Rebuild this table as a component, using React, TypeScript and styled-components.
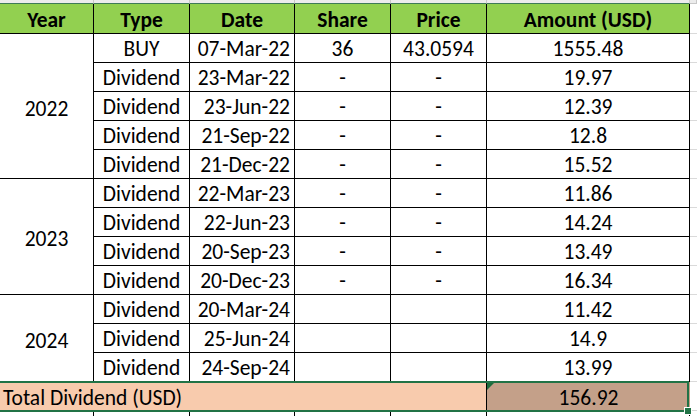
import React from 'react';
import styled, { createGlobalStyle } from 'styled-components';

const GlobalStyle = createGlobalStyle`
  html, body {
    margin: 0;
    padding: 0;
    background: #ffffff;
  }
  body {
    font-family: Calibri, Carlito, Lato, "Liberation Sans", sans-serif;
    color: #000000;
    overflow: hidden;
  }
`;

const COLS = '94px 96px 105px 96px 96px 203px 1fr';

const Sheet = styled.div`
  position: relative;
  width: 697px;
  height: 416px;
  overflow: hidden;
  display: grid;
  grid-template-columns: ${COLS};
  grid-auto-rows: 29px;
  grid-template-rows: 4px 30px;
`;

const StripCell = styled.div<{ $spill?: boolean }>`
  background: #ececec;
  border-right: 1px solid #c8c8c8;
  border-bottom: 1px solid ${(p) => (p.$spill ? '#c8c8c8' : '#3e7b57')};
  box-sizing: border-box;
`;

const HeadCell = styled.div`
  background: #92d050;
  border-right: 1px solid #000;
  border-bottom: 1px solid #000;
  box-sizing: border-box;
  font-weight: 700;
  font-size: 21.5px;
  display: flex;
  align-items: flex-end;
  justify-content: center;
  padding-bottom: 0;
  white-space: nowrap;
`;

const Cell = styled.div<{ $align?: 'center' | 'right' }>`
  border-right: 1px solid #000;
  border-bottom: 1px solid #000;
  box-sizing: border-box;
  font-size: 21.5px;
  display: flex;
  align-items: flex-end;
  justify-content: ${(p) => (p.$align === 'right' ? 'flex-end' : 'center')};
  padding: 0 4px 0 4px;
  white-space: nowrap;
`;

const YearCell = styled(Cell)<{ $rows: number }>`
  grid-row: span ${(p) => p.$rows};
  align-items: center;
  padding-top: 5px;
  padding-bottom: 0;
`;

const SpillCell = styled.div`
  border-bottom: 1px solid #dadada;
  box-sizing: border-box;
`;

const TotalLabel = styled.div`
  grid-column: span 5;
  background: #f8cbad;
  border-right: 1px solid #000;
  box-sizing: border-box;
  font-size: 21.5px;
  display: flex;
  align-items: center;
  padding: 3px 0 0 3px;
  white-space: nowrap;
`;

const TotalValue = styled.div`
  position: relative;
  background: #c4a089;
  font-size: 21.5px;
  display: flex;
  align-items: center;
  justify-content: center;
  padding-top: 3px;
`;

const ErrorMark = styled.span`
  position: absolute;
  left: 0;
  top: 1px;
  width: 0;
  height: 0;
  border-top: 7px solid #1e6b3c;
  border-right: 7px solid transparent;
`;

const TailCell = styled.div<{ $last?: boolean }>`
  border-right: ${(p) => (p.$last ? 'none' : '1px solid #000')};
  box-sizing: border-box;
`;

const Selection = styled.div`
  position: absolute;
  left: -4px;
  top: 381px;
  width: 693px;
  height: 31px;
  border: 2px solid #217346;
  box-sizing: border-box;
  pointer-events: none;
`;

const Handle = styled.span`
  position: absolute;
  right: -5px;
  bottom: -5px;
  width: 6px;
  height: 6px;
  background: #217346;
  border: 1px solid #ffffff;
`;

type Row = { type: string; date: string; share: string; price: string; amount: string };

const groups: { year: string; rows: Row[] }[] = [
  {
    year: '2022',
    rows: [
      { type: 'BUY', date: '07-Mar-22', share: '36', price: '43.0594', amount: '1555.48' },
      { type: 'Dividend', date: '23-Mar-22', share: '-', price: '-', amount: '19.97' },
      { type: 'Dividend', date: '23-Jun-22', share: '-', price: '-', amount: '12.39' },
      { type: 'Dividend', date: '21-Sep-22', share: '-', price: '-', amount: '12.8' },
      { type: 'Dividend', date: '21-Dec-22', share: '-', price: '-', amount: '15.52' },
    ],
  },
  {
    year: '2023',
    rows: [
      { type: 'Dividend', date: '22-Mar-23', share: '-', price: '-', amount: '11.86' },
      { type: 'Dividend', date: '22-Jun-23', share: '-', price: '-', amount: '14.24' },
      { type: 'Dividend', date: '20-Sep-23', share: '-', price: '-', amount: '13.49' },
      { type: 'Dividend', date: '20-Dec-23', share: '-', price: '-', amount: '16.34' },
    ],
  },
  {
    year: '2024',
    rows: [
      { type: 'Dividend', date: '20-Mar-24', share: '', price: '', amount: '11.42' },
      { type: 'Dividend', date: '25-Jun-24', share: '', price: '', amount: '14.9' },
      { type: 'Dividend', date: '24-Sep-24', share: '', price: '', amount: '13.99' },
    ],
  },
];

const headers = ['Year', 'Type', 'Date', 'Share', 'Price', 'Amount (USD)'];

const App = () => {
  return (
    <>
      <GlobalStyle />
      <Sheet>
        {headers.map((h) => (
          <StripCell key={`s-${h}`} />
        ))}
        <StripCell $spill />

        {headers.map((h) => (
          <HeadCell key={h}>{h}</HeadCell>
        ))}
        <SpillCell />

        {groups.map((g) =>
          g.rows.map((r, i) => (
            <React.Fragment key={`${g.year}-${r.date}`}>
              {i === 0 && <YearCell $rows={g.rows.length}>{g.year}</YearCell>}
              <Cell>{r.type}</Cell>
              <Cell $align="right">{r.date}</Cell>
              <Cell>{r.share}</Cell>
              <Cell>{r.price}</Cell>
              <Cell>{r.amount}</Cell>
              <SpillCell />
            </React.Fragment>
          ))
        )}

        <TotalLabel>Total Dividend (USD)</TotalLabel>
        <TotalValue>
          <ErrorMark />
          156.92
        </TotalValue>
        <SpillCell />

        {headers.map((h) => (
          <TailCell key={`t-${h}`} />
        ))}
        <TailCell $last />

        <Selection>
          <Handle />
        </Selection>
      </Sheet>
    </>
  );
};

export default App;
